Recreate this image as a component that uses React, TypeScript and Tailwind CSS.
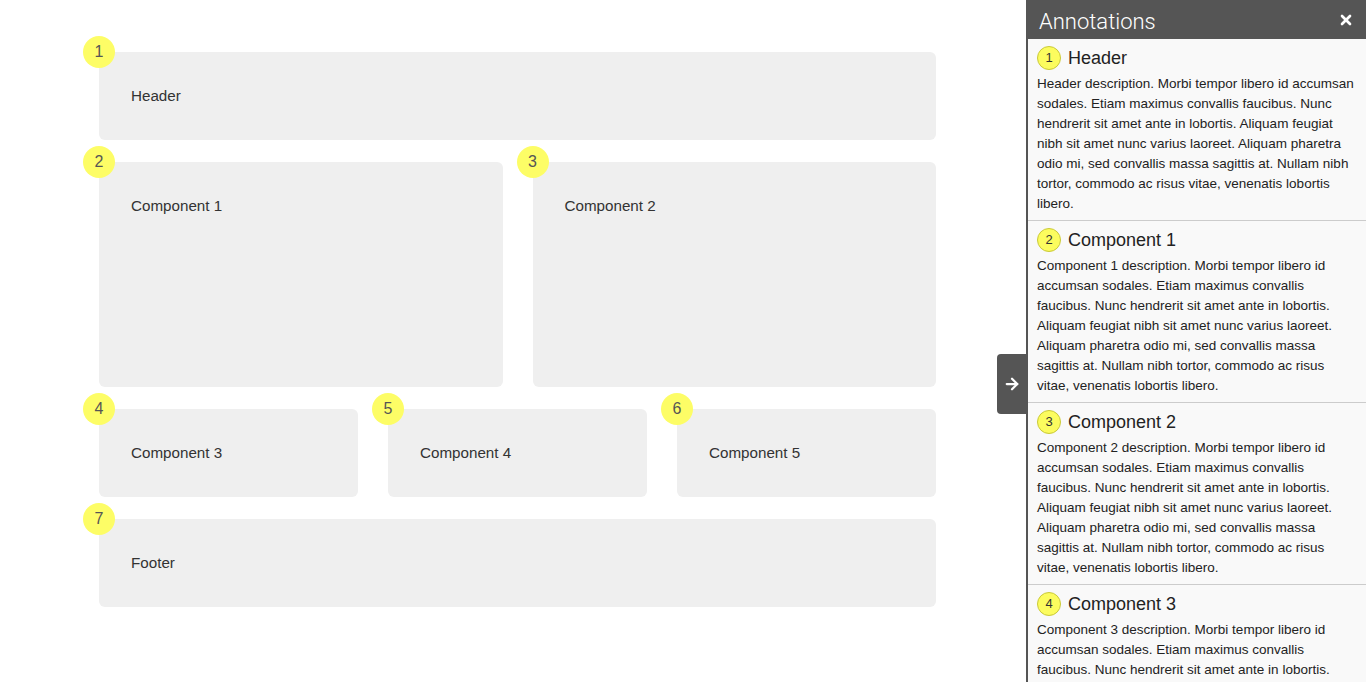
import React from 'react';
import { ArrowRight, X } from 'lucide-react';

const LOREM =
  'description. Morbi tempor libero id accumsan sodales. Etiam maximus convallis faucibus. Nunc hendrerit sit amet ante in lobortis. Aliquam feugiat nibh sit amet nunc varius laoreet. Aliquam pharetra odio mi, sed convallis massa sagittis at. Nullam nibh tortor, commodo ac risus vitae, venenatis lobortis libero.';

const annotations = [
  { n: 1, title: 'Header' },
  { n: 2, title: 'Component 1' },
  { n: 3, title: 'Component 2' },
  { n: 4, title: 'Component 3' },
  { n: 5, title: 'Component 4' },
  { n: 6, title: 'Component 5' },
  { n: 7, title: 'Footer' },
];

const Block: React.FC<{ n: number; label: string; className?: string }> = ({ n, label, className = '' }) => (
  <div className={`relative rounded-md bg-[#efefef] px-8 pt-8 text-[15.2px] leading-6 text-[#333] ${className}`}>
    {label}
    <span className="absolute -left-4 -top-4 flex h-8 w-8 items-center justify-center rounded-full bg-[#fdfd66] text-[16px] text-[#555]">
      {n}
    </span>
  </div>
);

export default function App() {
  return (
    <div className="relative h-[682px] w-[1366px] overflow-hidden bg-white font-['Liberation_Sans',Arial,sans-serif]">
      {/* Mockup */}
      <div className="flex w-[936px] flex-col gap-[22px] pl-[99px] pt-[52px]">
        <Block n={1} label="Header" className="h-[88px]" />
        <div className="flex h-[225px] gap-[30px]">
          <Block n={2} label="Component 1" className="flex-1" />
          <Block n={3} label="Component 2" className="flex-1" />
        </div>
        <div className="flex h-[88px] gap-[30px]">
          <Block n={4} label="Component 3" className="flex-1" />
          <Block n={5} label="Component 4" className="flex-1" />
          <Block n={6} label="Component 5" className="flex-1" />
        </div>
        <Block n={7} label="Footer" className="h-[88px]" />
      </div>

      {/* Annotations panel */}
      <div className="absolute right-0 top-0 flex h-full w-[340px] flex-col border-l-2 border-[#555] bg-[#f9f9f9]">
        <div className="flex h-[39px] shrink-0 items-center justify-between bg-[#555] pl-[11px] pr-[12px] pt-[3px]">
          <span className="font-['Roboto',sans-serif] text-[22px] font-light text-white">Annotations</span>
          <X className="-mt-[3px] h-[16px] w-[16px] text-white" strokeWidth={4} />
        </div>
        <div className="flex-1 overflow-hidden">
          {annotations.map((a) => (
            <div key={a.n} className="border-b border-[#ccc] pb-[6px] pl-[9px] pr-[7px] pt-[5px]">
              <div className="flex h-[30px] items-center gap-[7px] pb-[2px]">
                <span className="flex h-[24px] w-[24px] items-center justify-center rounded-full border border-[#c9c93a] bg-[#fcfc5e] text-[13px] text-[#333]">
                  {a.n}
                </span>
                <span className="text-[18px] text-[#222]">{a.title}</span>
              </div>
              <p className="text-[13.5px] leading-5 text-[#222]">
                {a.title} {LOREM}
              </p>
            </div>
          ))}
        </div>

        {/* Toggle tab */}
        <div className="absolute -left-[31px] top-[354px] flex h-[60px] w-[29px] items-center justify-center rounded-l-[4px] bg-[#555]">
          <ArrowRight className="h-[18px] w-[18px] text-white" strokeWidth={3} />
        </div>
      </div>
    </div>
  );
}
